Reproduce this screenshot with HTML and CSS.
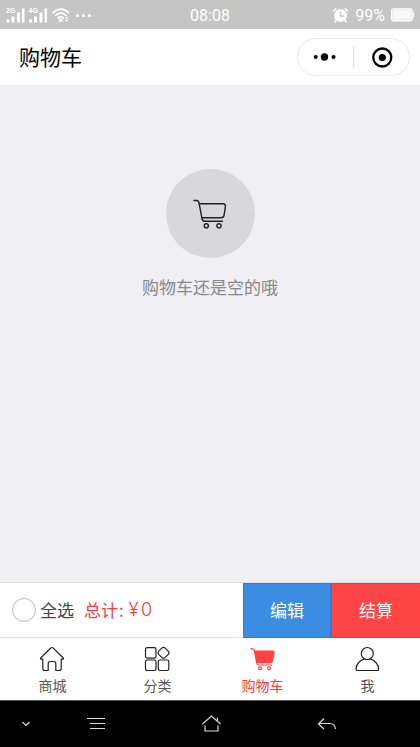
FILE: index.html
```html
<!DOCTYPE html>
<html lang="zh-CN">
<head>
<meta charset="utf-8">
<title>购物车</title>
<link rel="stylesheet" href="styles.css">
</head>
<body>
<div class="phone">
  <div class="status">
    <svg class="signals" width="90" height="29" viewBox="0 0 90 29" fill="#fff">
      <text x="0" y="12" class="net">2G</text>
      <text x="22.500" y="12" class="net">4G</text>
      <path d="M.5 18.500h3v3h-3zM5.500 15.500h3v6h-3zM11 11.500h3v10h-3zM16 7.500h2.500v14H16zM23 18.500h3v3h-3zM28 15.500h3v6h-3zM33.500 11.500h3v10h-3zM38.500 7.500H41v14h-2.500z"/>
      <g fill="none" stroke="#fff" stroke-width="1.700" stroke-linecap="round"><path d="M47 11.700q8-7 15.500 0M49.500 14.300q5.300-4.500 10.500 0M52 17q2.800-2.500 5.500 0"/></g>
      <circle cx="54.700" cy="19.200" r="2"/>
      <path d="M59 17.500l1.800-2 1.700 2zM59 18.800h3.500l-1.700 2z"/>
      <circle cx="71.500" cy="14.500" r="1.500"/><circle cx="77.500" cy="14.500" r="1.500"/><circle cx="83.500" cy="14.500" r="1.500"/>
    </svg>
    <span class="clock">08:08</span>
    <div class="power">
      <svg width="17" height="17" viewBox="0 0 17 17"><circle cx="8.500" cy="8.500" r="6.500" fill="#fff"/><path d="M1.500 4l2.200-2.200M15.500 4l-2.200-2.200M4 13.500l-1 1.200M13 13.500l1 1.200" stroke="#fff" stroke-width="1.600" stroke-linecap="round"/><path d="M8.500 5v4H12" fill="none" stroke="#c5c5c5" stroke-width="1.400"/></svg>
      <span>99%</span>
      <svg class="battery" width="24" height="14" viewBox="0 0 24 14"><rect x=".6" y=".9" width="20.500" height="12" rx="1.800" fill="#ececec" stroke="#fff" stroke-width="1.200"/><path d="M2.500 2.700h16.800v8.400H2.500zM22 4.500h1.200v5H22z" fill="#f9f9f9"/></svg>
    </div>
  </div>
  <header class="header">
    <h1>购物车</h1>
    <div class="capsule">
      <svg width="55" height="36" viewBox="0 0 55 36"><circle cx="17.700" cy="18" r="2"/><circle cx="26.500" cy="18" r="3.700"/><circle cx="35.500" cy="18" r="2"/></svg>
      <i class="split"></i>
      <svg width="55" height="36" viewBox="0 0 55 36"><circle cx="28.300" cy="18.500" r="9" fill="none" stroke="#000" stroke-width="2.300"/><circle cx="28.300" cy="18.500" r="3.600"/></svg>
    </div>
  </header>
  <main class="empty">
    <div class="disc">
      <svg width="34" height="30" viewBox="0 0 34 30" fill="none" stroke="#222" stroke-width="1.400" stroke-linecap="round" stroke-linejoin="round"><path d="M1 1.500h2.700Q5.500 1.500 6 4l3 15.500Q9.500 22.300 12 22.300h17.500M6.500 4.800h23.700q2.500 0 2.200 2.500l-1.300 8.800q-.4 2.700-3.100 2.700H9"/><circle cx="13.300" cy="26.800" r="2.100"/><circle cx="26" cy="26.800" r="2.100"/></svg>
    </div>
    <p>购物车还是空的哦</p>
  </main>
  <section class="checkout">
    <div class="summary"><i class="radio"></i><span class="all">全选</span><span class="total">总计<b class="colon">:</b><b class="yen">¥</b><b class="amount">0</b></span></div>
    <div class="btn edit"><span>编辑</span></div>
    <div class="btn pay"><span>结算</span></div>
  </section>
  <nav class="tabs">
    <div class="tab">
      <svg width="26" height="26" viewBox="0 0 26 26" fill="none" stroke="#222" stroke-width="1.200" stroke-linejoin="round"><path d="M13 1.500Q13.700 1.500 14.500 2.300L24.300 12q.8 1.200-.8 1.200h-1.300v9q0 2.300-2.300 2.300h-3.100v-6.800q0-2.200-2.200-2.200h-3.200q-2.200 0-2.200 2.200v6.800H6.100q-2.300 0-2.300-2.300v-9H2.500q-1.600 0-.8-1.200l9.800-9.700q.8-.8 1.500-.8z"/></svg>
      <span>商城</span>
    </div>
    <div class="tab">
      <svg width="26" height="26" viewBox="0 0 26 26" fill="none" stroke="#222" stroke-width="1.200" stroke-linejoin="round"><rect x="1.500" y="1.600" width="10.500" height="10.500" rx="1.700"/><rect x="1.500" y="14" width="10.500" height="10.500" rx="1.700"/><rect x="14.300" y="14" width="10.500" height="10.500" rx="1.700"/><path d="M18 1.900q1.500-.9 3 0l3.400 3.400q1.100 1.500 0 3L21 11.700q-1.500.9-3 0l-3.400-3.400q-1.100-1.500 0-3z"/></svg>
      <span>分类</span>
    </div>
    <div class="tab active">
      <svg width="26" height="26" viewBox="0 0 26 26" fill="none" stroke="#ff4142" stroke-width="1.200" stroke-linecap="round" stroke-linejoin="round"><path d="M6 5h17.500q1.800 0 1.500 1.700l-1.500 8.300q-.4 1.700-2 1.700H8z" fill="#ff4142"/><path d="M1.800 2.800h1.900q1.300 0 1.600 1.500l2.500 13Q8.200 19 9.900 19h12.600"/><circle cx="11" cy="22.300" r="1.500"/><circle cx="20" cy="22.300" r="1.500"/></svg>
      <span>购物车</span>
    </div>
    <div class="tab">
      <svg width="26" height="26" viewBox="0 0 26 26" fill="none" stroke="#222" stroke-width="1.200" stroke-linejoin="round"><circle cx="13.300" cy="7.500" r="6"/><path d="M10.300 13.200C5.300 14.500 2 18.700 2 23.200q0 1.300 1.300 1.300h20q1.300 0 1.300-1.300c0-4.500-3.300-8.700-8.300-10"/></svg>
      <span>我</span>
    </div>
  </nav>
  <footer class="system">
    <svg width="420" height="46" viewBox="0 0 420 46" fill="none" stroke="#ddd" stroke-width="1.200"><path d="M22.500 21l3.500 3.500 3.500-3.500"/><path d="M87 17.500h18M90 22.500h15M90 27.500h15"/><path d="M202.500 23l9-8 9 8M217.500 16.500v3M205 24.500v5.500h13v-5.500"/><path d="M324 17.500L318.500 23l5.500 5M318.500 22.500h11q5.500 0 6 5.500"/></svg>
  </footer>
</div>
</body>
</html>
```

FILE: styles.css
```css
* { box-sizing: border-box; }
body { margin: 0; font-family: "Noto Sans CJK SC", sans-serif; font-weight: 400; }
h1, p { margin: 0; font-weight: inherit; }
svg { display: block; flex: none; }
.phone { width: 420px; height: 747px; display: flex; flex-direction: column; background: #fff; }

.status { height: 29px; flex: none; display: grid; grid-template-columns: 1fr 40px 1fr; align-items: center; padding: 0 6px; background: #c5c5c5; color: #fff; }
.net { font: bold 7px "Liberation Sans", sans-serif; }
.clock { font: 400 16px/28px Roboto, sans-serif; text-align: center; white-space: nowrap; padding-top: 2px; }
.power { display: flex; align-items: center; justify-content: flex-end; font: 400 16px/27px Roboto, sans-serif; }
.power span { margin: 1px 6px 0 6px; }
.battery { margin-right: -1px; }

.header { height: 56px; flex: none; display: flex; align-items: center; justify-content: space-between; padding: 0 10px 0 19px; }
.header h1 { font-size: 21px; line-height: 30px; color: #000; padding-bottom: 2px; }
.capsule { width: 113px; height: 38px; display: flex; align-items: center; border: 1px solid #e9e9eb; border-radius: 19px; }
.split { width: 1px; height: 22px; flex: none; background: #dedee0; }

.empty { flex: 1; display: flex; flex-direction: column; align-items: center; padding-top: 84px; background: #efeff4; }
.disc { width: 89px; height: 89px; flex: none; display: flex; align-items: center; justify-content: center; border-radius: 50%; background: #d8d8dc; }
.empty p { margin-top: 16px; font-size: 17px; line-height: 25px; color: #888; }

.checkout { height: 56px; flex: none; display: flex; border-top: 1px solid #dedee0; border-bottom: 1px solid #e3e3e5; font-size: 17px; }
.summary { width: 243px; display: flex; align-items: center; padding-left: 12px; }
.radio { width: 24px; height: 24px; border: 1.500px solid #bbb; border-radius: 50%; margin-right: 4px; }
.all { width: 44px; color: #444; padding-bottom: 2px; }
.total { display: flex; align-items: center; color: #ff3838; padding-bottom: 2px; }
.total b { font-weight: inherit; }
.colon { width: 8px; padding-left: 1px; }
.total .yen, .total .amount { font-family: Inter, sans-serif; font-weight: 300; font-size: 18px; line-height: 24px; padding-top: 2px; }
.yen { width: 15px; text-align: center; }
.btn { display: flex; align-items: center; justify-content: center; color: #fff; margin-bottom: -1px; }
.btn span { margin-top: -2px; }
.edit { width: 88px; background: #3b8de4; border: 1px solid #2480e0; }
.pay { width: 89px; background: #ff4545; border: 1px solid #ff2e30; border-right: 0; }

.tabs { height: 62px; flex: none; display: grid; grid-template-columns: repeat(4, 1fr); }
.tab { display: flex; flex-direction: column; align-items: center; padding-top: 8px; font-size: 14px; line-height: 20px; color: #555; }
.tab svg { margin-right: 1px; }
.tab span { margin-top: 3px; }
.tab.active { color: #ff3838; }

.system { height: 47px; flex: none; background: #000; border-top: 1px solid #555; }
```
